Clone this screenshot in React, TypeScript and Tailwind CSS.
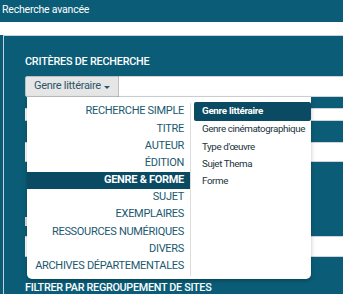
import React from "react";

const leftItems = [
  "RECHERCHE SIMPLE",
  "TITRE",
  "AUTEUR",
  "ÉDITION",
  "GENRE & FORME",
  "SUJET",
  "EXEMPLAIRES",
  "RESSOURCES NUMÉRIQUES",
  "DIVERS",
  "ARCHIVES DÉPARTEMENTALES",
];

const rightItems = [
  "Genre cinématographique",
  "Type d'œuvre",
  "Sujet Thema",
  "Forme",
];

export default function App() {
  return (
    <div
      className="w-[343px] h-[294px] overflow-hidden bg-white flex flex-col"
      style={{ fontFamily: "Roboto, 'Noto Sans', sans-serif" }}
    >
      <div className="h-[22px] shrink-0 bg-[#0b5d77] text-white text-[10.5px] tracking-[-0.2px] leading-[20px] pl-[2px]">
        Recherche avancée
      </div>
      <div className="h-[13px] shrink-0 bg-white" />
      <div className="flex-1 bg-[#0b5d77] pl-[3px]">
        <div className="h-full border-l border-t border-[#c9d3d7] bg-[#0b5d77] pl-[21px] pt-[19px]">
          <div className="text-white text-[10.8px] font-medium tracking-[-0.2px] leading-[14px] h-[14px]">
            CRITÈRES DE RECHERCHE
          </div>
          <div className="relative mt-[7px] flex h-[21px]">
            <div className="w-[94px] shrink-0 rounded-l-[2px] border border-[#b9bfc2] bg-[#e6e6e6] flex items-center pl-[8px] text-[11px] tracking-[-0.3px] text-[#2c5668]">
              Genre littéraire
              <span className="ml-[3px] mt-[1px] inline-block w-0 h-0 border-l-[3px] border-r-[3px] border-t-[3px] border-l-transparent border-r-transparent border-t-[#2c5668]" />
            </div>
            <div className="flex-1 bg-white border-y border-[#d0d4d6]" />

            <div className="absolute left-[2px] top-[21px] w-[284px] h-[182px] bg-white rounded-b-[5px] shadow-[0_2px_4px_rgba(0,0,0,0.25)] flex z-10">
              <div className="w-[164px] mt-[6px] mb-[3px] border-r border-[#dcdcdc] flex flex-col">
                {leftItems.map((t) => (
                  <div
                    key={t}
                    className={
                      t === "GENRE & FORME"
                        ? "h-[17.2px] shrink-0 flex items-center justify-end pr-[6px] bg-[#0a4a62] text-white font-bold text-[11px] tracking-[-0.3px]"
                        : "h-[17.2px] shrink-0 flex items-center justify-end pr-[6px] text-[#1b5870] text-[11px] tracking-[-0.3px]"
                    }
                  >
                    {t}
                  </div>
                ))}
              </div>
              <div className="flex-1 pl-[3px] pt-[5px] flex flex-col">
                <div className="h-[19px] shrink-0 flex items-center pl-[8px] bg-[#0a4a62] rounded-[2px] text-white font-bold text-[9.8px] tracking-[-0.3px]">
                  Genre littéraire
                </div>
                {rightItems.map((t) => (
                  <div
                    key={t}
                    className="h-[17.3px] shrink-0 flex items-center pl-[8px] text-[#22343b] text-[9.8px] tracking-[-0.4px]"
                  >
                    {t}
                  </div>
                ))}
              </div>
            </div>
          </div>

          <div className="mt-[11px] h-[13px] bg-white border-y border-[#d0d4d6]" />
          <div className="mt-[21px] h-[20px] bg-white border-y border-[#d0d4d6]" />
          <div className="mt-[55px] h-[9px] w-[2px] bg-[#dfe5e8]" />
          <div className="mt-[10px] h-[21px] bg-white border-y border-[#d0d4d6]" />
          <div className="mt-[25px] text-white text-[10.8px] font-medium tracking-[-0.3px] leading-[12px]">
            FILTRER PAR REGROUPEMENT DE SITES
          </div>
        </div>
      </div>
    </div>
  );
}
